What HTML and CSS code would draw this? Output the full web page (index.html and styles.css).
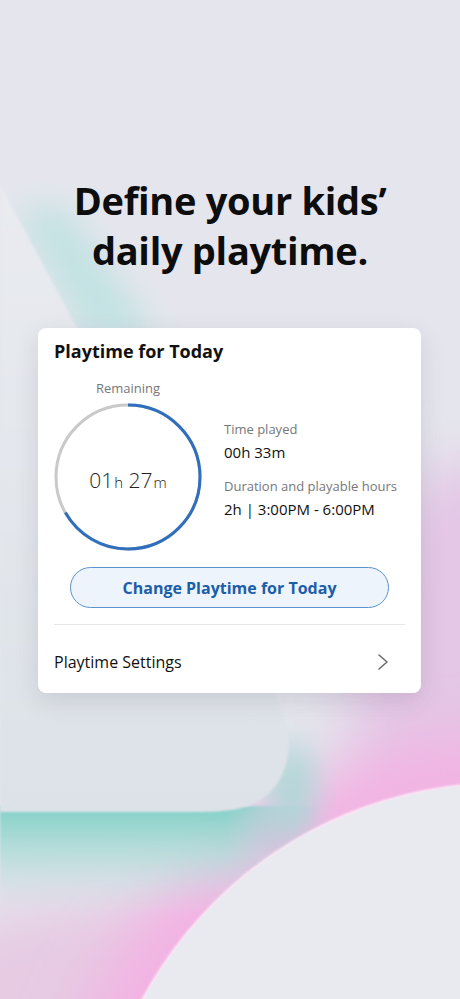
FILE: index.html
```html
<!DOCTYPE html>
<html lang="en">

<head>
  <meta charset="UTF-8">
  <meta name="viewport" content="width=device-width, initial-scale=1.0">
  <title>Playtime</title>
  <link rel="stylesheet" href="styles.css">
</head>

<body>
  <!-- decorative background shapes -->
  <svg class="backdrop" width="460" height="999" viewBox="0 0 460 999" aria-hidden="true">
    <defs>
      <filter id="blur-lg" x="-50%" y="-50%" width="200%" height="200%">
        <feGaussianBlur stdDeviation="28" />
      </filter>
      <filter id="blur-md" x="-50%" y="-50%" width="200%" height="200%">
        <feGaussianBlur stdDeviation="16" />
      </filter>
      <filter id="blur-sm" x="-20%" y="-20%" width="140%" height="140%">
        <feGaussianBlur stdDeviation="1.2" />
      </filter>
      <linearGradient id="panel-fill" x1="0" y1="0" x2="0" y2="1">
        <stop offset="0" stop-color="#e9ebf0" />
        <stop offset="1" stop-color="#dde2e8" />
      </linearGradient>
      <linearGradient id="teal-band" x1="0" y1="0" x2="0" y2="1">
        <stop offset="0" stop-color="#80d0c6" />
        <stop offset="0.45" stop-color="#b2dcd8" stop-opacity="0.8" />
        <stop offset="1" stop-color="#d6dbe4" stop-opacity="0" />
      </linearGradient>
      <linearGradient id="teal-fade" x1="0" y1="0" x2="1" y2="0">
        <stop offset="0" stop-color="#fff" />
        <stop offset="0.7" stop-color="#fff" />
        <stop offset="1" stop-color="#fff" stop-opacity="0" />
      </linearGradient>
      <mask id="band-mask">
        <rect x="0" y="790" width="320" height="140" fill="url(#teal-fade)" />
      </mask>
    </defs>
    <rect width="460" height="999" fill="#e5e6ed" />
    <!-- lavender / pink wash on the right and bottom -->
    <ellipse cx="470" cy="720" rx="120" ry="260" fill="#e4c6e6" filter="url(#blur-lg)" />
    <ellipse cx="110" cy="990" rx="190" ry="90" fill="#e6cbe3" filter="url(#blur-lg)" />
    <circle cx="504" cy="1193" r="455" fill="#f3b3e3" filter="url(#blur-lg)" />
    <!-- teal glow along the panel edges -->
    <polygon points="15,210 85,340 160,340 65,205" fill="#bfe2e2" opacity="0.9" filter="url(#blur-md)" />
    <g mask="url(#band-mask)">
      <rect x="0" y="806" width="320" height="110" fill="url(#teal-band)" filter="url(#blur-sm)" />
    </g>
    <ellipse cx="292" cy="790" rx="22" ry="50" fill="#acd8d6" filter="url(#blur-md)" />
    <!-- light panel -->
    <path d="M0 185 L272 690 C292 725 296 762 272 790 C256 807 236 812 200 812 L0 812 Z" fill="url(#panel-fill)" filter="url(#blur-sm)" />
    <!-- big round shape -->
    <circle cx="504" cy="1193" r="411" fill="#fbeaf7" filter="url(#blur-sm)" />
    <circle cx="504" cy="1193" r="409" fill="#e9eaf0" />
  </svg>

  <main class="screen">
    <h1 class="headline">Define your kids’<br>daily playtime.</h1>

    <section class="card">
      <h2 class="card-title">Playtime for Today</h2>

      <div class="summary">
        <div class="remaining">
          <span class="remaining-label">Remaining</span>
          <div class="ring">
            <svg width="148" height="148" viewBox="0 0 148 148">
              <circle cx="74" cy="74" r="72" fill="none" stroke="#c9c9c9" stroke-width="3" />
              <!-- 240 of 360 degrees, starting at 12 o'clock -->
              <circle cx="74" cy="74" r="72" fill="none" stroke="#2f6fbd" stroke-width="3"
                stroke-dasharray="301.6 452.4" transform="rotate(-90 74 74)" />
            </svg>
            <div class="ring-time"><span>01<small>h</small> 27<small>m</small></span></div>
          </div>
        </div>

        <dl class="stats">
          <dt>Time played</dt>
          <dd>00h 33m</dd>
          <dt>Duration and playable hours</dt>
          <dd>2h | 3:00PM - 6:00PM</dd>
        </dl>
      </div>

      <button class="change-btn">Change Playtime for Today</button>

      <a class="settings-row" href="#">
        <span>Playtime Settings</span>
        <svg width="12" height="18" viewBox="0 0 12 18">
          <path d="M2 2 L10 9 L2 16" fill="none" stroke="#6b6b6b" stroke-width="1.6" stroke-linecap="round" stroke-linejoin="round" />
        </svg>
      </a>
    </section>
  </main>
</body>

</html>
```

FILE: styles.css
```css
body {
  margin: 0;
  font-family: "Open Sans", "Noto Sans", sans-serif;
  color: #111;
  background-color: #e5e6ed;
  position: relative;
  width: 460px;
  height: 999px;
  overflow: hidden;
}

.backdrop {
  position: absolute;
  top: 0;
  left: 0;
  z-index: 0;
}

.screen {
  position: relative;
  z-index: 1;
  padding-top: 175px;
}

.headline {
  margin: 0;
  text-align: center;
  font-size: 38px;
  line-height: 50px;
  font-weight: 700;
  color: #0d0d0d;
  letter-spacing: -0.3px;
}

.card {
  margin: 53px 39px 0 38px;
  background-color: #fff;
  border-radius: 8px;
  box-shadow: 0 8px 24px rgba(60, 60, 80, 0.14);
  padding: 11px 16px 0;
  height: 354px;
}

.card-title {
  margin: 0;
  font-size: 18px;
  line-height: 24px;
  font-weight: 700;
}

.summary {
  display: flex;
  margin-top: 16px;
}

.remaining {
  display: flex;
  flex-direction: column;
  align-items: center;
  width: 148px;
}

.remaining-label {
  font-size: 13px;
  line-height: 18px;
  color: #777;
}

.ring {
  position: relative;
  width: 148px;
  height: 148px;
  margin-top: 6px;
}

.ring svg {
  display: block;
}

.ring-time {
  position: absolute;
  inset: 0;
  display: flex;
  align-items: center;
  justify-content: center;
  font-size: 21px;
  font-weight: 300;
  color: #222;
  padding-top: 6px;
}

.ring-time small {
  font-size: 15px;
  margin-left: 1px;
}

.stats {
  margin: 41px 0 0 22px;
}

.stats dt {
  font-size: 13px;
  line-height: 18px;
  color: #777;
}

.stats dd {
  margin: 4px 0 15px;
  font-size: 15px;
  line-height: 20px;
  color: #111;
}

.change-btn {
  display: block;
  width: 319px;
  height: 41px;
  margin: 16px auto 0;
  border: 1px solid #5a93cf;
  border-radius: 21px;
  background-color: #edf4fc;
  color: #1c5ea8;
  font-family: inherit;
  font-size: 16px;
  font-weight: 700;
}

.settings-row {
  display: flex;
  align-items: center;
  justify-content: space-between;
  margin-top: 16px;
  border-top: 1px solid #e6e6e6;
  height: 62px;
  color: #111;
  font-size: 16px;
  text-decoration: none;
  padding-right: 16px;
  padding-top: 6px;
}
```
